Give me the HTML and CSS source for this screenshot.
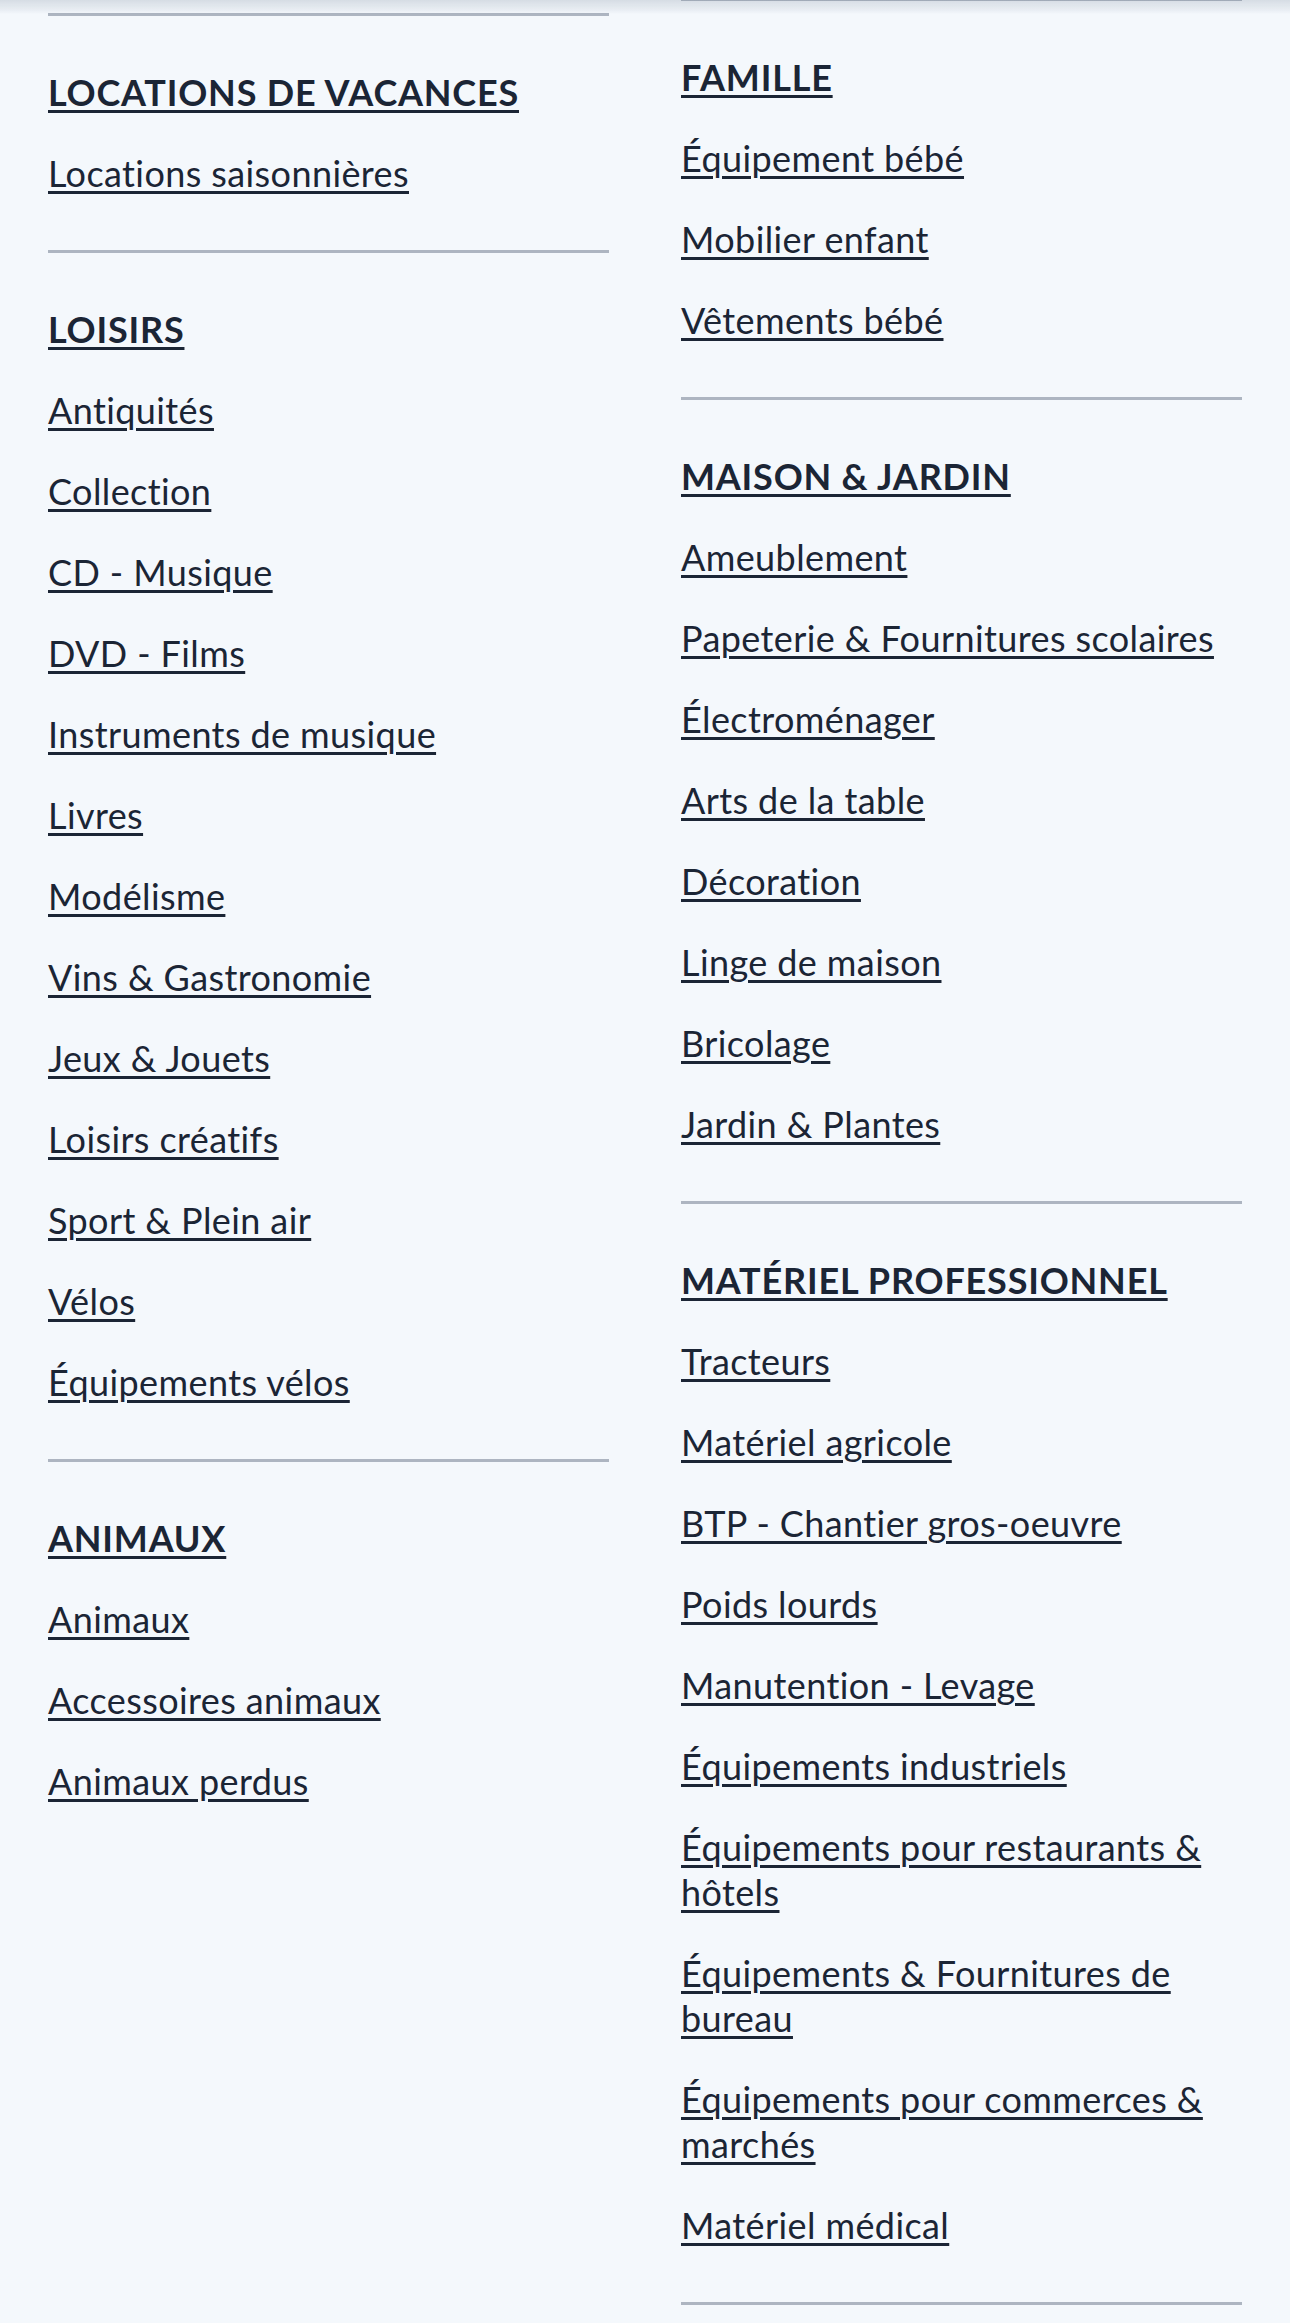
FILE: index.html
```html
<!DOCTYPE html>
<html lang="fr">
<head>
<meta charset="utf-8">
<title>Catégories</title>
<link rel="stylesheet" href="styles.css">
</head>
<body>
<div class="header-shadow"></div>
<main class="columns">
  <div class="col col-left">
    <section class="cat">
      <a class="cat-title" href="#">LOCATIONS DE VACANCES</a>
      <ul class="links">
        <li><a href="#">Locations saisonnières</a></li>
      </ul>
    </section>
    <section class="cat">
      <a class="cat-title" href="#">LOISIRS</a>
      <ul class="links">
        <li><a href="#">Antiquités</a></li>
        <li><a href="#">Collection</a></li>
        <li><a href="#">CD - Musique</a></li>
        <li><a href="#">DVD - Films</a></li>
        <li><a href="#">Instruments de musique</a></li>
        <li><a href="#">Livres</a></li>
        <li><a href="#">Modélisme</a></li>
        <li><a href="#">Vins &amp; Gastronomie</a></li>
        <li><a href="#">Jeux &amp; Jouets</a></li>
        <li><a href="#">Loisirs créatifs</a></li>
        <li><a href="#">Sport &amp; Plein air</a></li>
        <li><a href="#">Vélos</a></li>
        <li><a href="#">Équipements vélos</a></li>
      </ul>
    </section>
    <section class="cat">
      <a class="cat-title" href="#">ANIMAUX</a>
      <ul class="links">
        <li><a href="#">Animaux</a></li>
        <li><a href="#">Accessoires animaux</a></li>
        <li><a href="#">Animaux perdus</a></li>
      </ul>
    </section>
  </div>
  <div class="col col-right">
    <section class="cat">
      <a class="cat-title" href="#">FAMILLE</a>
      <ul class="links">
        <li><a href="#">Équipement bébé</a></li>
        <li><a href="#">Mobilier enfant</a></li>
        <li><a href="#">Vêtements bébé</a></li>
      </ul>
    </section>
    <section class="cat">
      <a class="cat-title" href="#">MAISON &amp; JARDIN</a>
      <ul class="links">
        <li><a href="#">Ameublement</a></li>
        <li><a href="#">Papeterie &amp; Fournitures scolaires</a></li>
        <li><a href="#">Électroménager</a></li>
        <li><a href="#">Arts de la table</a></li>
        <li><a href="#">Décoration</a></li>
        <li><a href="#">Linge de maison</a></li>
        <li><a href="#">Bricolage</a></li>
        <li><a href="#">Jardin &amp; Plantes</a></li>
      </ul>
    </section>
    <section class="cat">
      <a class="cat-title" href="#">MATÉRIEL PROFESSIONNEL</a>
      <ul class="links">
        <li><a href="#">Tracteurs</a></li>
        <li><a href="#">Matériel agricole</a></li>
        <li><a href="#">BTP - Chantier gros-oeuvre</a></li>
        <li><a href="#">Poids lourds</a></li>
        <li><a href="#">Manutention - Levage</a></li>
        <li><a href="#">Équipements industriels</a></li>
        <li><a href="#">Équipements pour restaurants &amp; hôtels</a></li>
        <li><a href="#">Équipements &amp; Fournitures de bureau</a></li>
        <li><a href="#">Équipements pour commerces &amp; marchés</a></li>
        <li><a href="#">Matériel médical</a></li>
      </ul>
    </section>
    <div class="cat cat-next"></div>
  </div>
</main>
</body>
</html>
```
FILE: styles.css
```css
* {
  box-sizing: border-box;
}

html, body {
  margin: 0;
  padding: 0;
  background: #f4f8fc;
}

body {
  font-family: Lato, "Noto Sans", sans-serif;
  font-size: 36px;
  line-height: 45px;
  letter-spacing: 0.4px;
  font-variant-ligatures: none;
  color: #1b2535;
  height: 2323px;
  overflow: hidden;
}

.header-shadow {
  position: fixed;
  top: 0;
  left: 0;
  right: 0;
  height: 14px;
  background: linear-gradient(to bottom, rgba(120, 135, 155, 0.24), rgba(120, 135, 155, 0.08) 75%, rgba(120, 135, 155, 0));
  z-index: 10;
}

.columns {
  display: grid;
  grid-template-columns: 1fr 1fr;
  column-gap: 72px;
  padding: 0 48px;
  margin-top: -2px;
  align-items: start;
}

.col-left {
  padding-top: 15px;
}

.cat {
  border-top: 3px solid #adb5c1;
  padding: 54px 0 54px;
  display: flex;
  flex-direction: column;
  gap: 36px;
}

.cat-next {
  padding: 0;
  height: 60px;
}

.cat-title {
  align-self: flex-start;
  font-weight: 700;
  letter-spacing: 0.8px;
  color: #1b2535;
  text-decoration: underline;
  text-decoration-thickness: 2.5px;
  text-underline-offset: 4px;
}

.links {
  list-style: none;
  margin: 0;
  padding: 0;
  display: flex;
  flex-direction: column;
  gap: 36px;
}

.links a {
  color: #1b2535;
  text-decoration: underline;
  text-decoration-thickness: 2.5px;
  text-underline-offset: 4px;
}
```
